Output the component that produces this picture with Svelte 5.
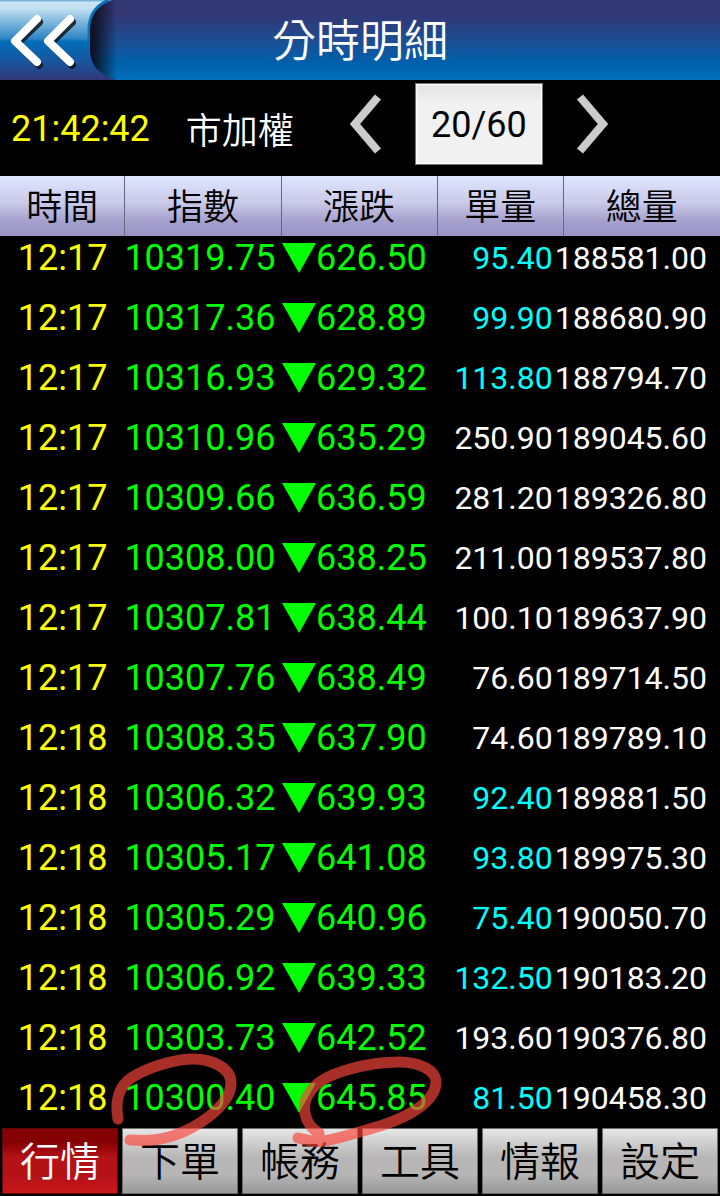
<script lang="ts">
    type Tick = {
        time: string
        price: string
        diff: string
        volume: string
        total: string
        small?: boolean
    }

    const columns = ['時間', '指數', '漲跌', '單量', '總量']

    // small: 單量以青色顯示
    const ticks: Tick[] = [
        { time: '12:17', price: '10319.75', diff: '626.50', volume: '95.40', total: '188581.00', small: true },
        { time: '12:17', price: '10317.36', diff: '628.89', volume: '99.90', total: '188680.90', small: true },
        { time: '12:17', price: '10316.93', diff: '629.32', volume: '113.80', total: '188794.70', small: true },
        { time: '12:17', price: '10310.96', diff: '635.29', volume: '250.90', total: '189045.60' },
        { time: '12:17', price: '10309.66', diff: '636.59', volume: '281.20', total: '189326.80' },
        { time: '12:17', price: '10308.00', diff: '638.25', volume: '211.00', total: '189537.80' },
        { time: '12:17', price: '10307.81', diff: '638.44', volume: '100.10', total: '189637.90' },
        { time: '12:17', price: '10307.76', diff: '638.49', volume: '76.60', total: '189714.50' },
        { time: '12:18', price: '10308.35', diff: '637.90', volume: '74.60', total: '189789.10' },
        { time: '12:18', price: '10306.32', diff: '639.93', volume: '92.40', total: '189881.50', small: true },
        { time: '12:18', price: '10305.17', diff: '641.08', volume: '93.80', total: '189975.30', small: true },
        { time: '12:18', price: '10305.29', diff: '640.96', volume: '75.40', total: '190050.70', small: true },
        { time: '12:18', price: '10306.92', diff: '639.33', volume: '132.50', total: '190183.20', small: true },
        { time: '12:18', price: '10303.73', diff: '642.52', volume: '193.60', total: '190376.80' },
        { time: '12:18', price: '10300.40', diff: '645.85', volume: '81.50', total: '190458.30', small: true },
    ]

    const tabs = ['行情', '下單', '帳務', '工具', '情報', '設定']

    let active = $state('行情')
</script>

<div class="app">
    <header>
        <button class="back" aria-label="返回">
            <svg viewBox="0 0 120 80" width="120" height="80">
                <defs>
                    <linearGradient id="gloss" x1="0" y1="0" x2="0" y2="1">
                        <stop offset="0" stop-color="#5fa9d6" />
                        <stop offset="0.03" stop-color="#cbe5f3" />
                        <stop offset="0.1" stop-color="#c3e1f1" />
                        <stop offset="0.48" stop-color="#2f86c5" />
                        <stop offset="0.52" stop-color="#006db8" />
                        <stop offset="0.75" stop-color="#1658a1" />
                        <stop offset="1" stop-color="#323676" />
                    </linearGradient>
                    <linearGradient id="shade" x1="0" y1="0" x2="1" y2="0">
                        <stop offset="0" stop-color="#0b0b18" stop-opacity="0.95" />
                        <stop offset="0.25" stop-color="#0b0b18" stop-opacity="0.75" />
                        <stop offset="0.9" stop-color="#0b0b18" stop-opacity="0" />
                    </linearGradient>
                    <clipPath id="edge">
                        <path d="M120 0H112Q90 8 90 30V50Q90 72 116 80H120Z" />
                    </clipPath>
                </defs>
                <path d="M0 0H112Q90 8 90 30V50Q90 72 116 80H0Z" fill="url(#gloss)" />
                <path d="M109 0Q89 8 89 30V40" fill="none" stroke="#0872bb" stroke-width="3" />
                <rect x="90" width="30" height="80" fill="url(#shade)" clip-path="url(#edge)" />
                <g fill="none" stroke-width="8" stroke-linecap="round" stroke-linejoin="round">
                    <path d="M39 22L17 43L39 65M72 22L50 43L72 65" stroke="#10151d" stroke-opacity="0.85" />
                    <path d="M37 19L15 41L37 62M70 19L48 41L70 62" stroke="#fff" />
                </g>
            </svg>
        </button>
        <h1>分時明細</h1>
    </header>

    <section class="info">
        <time>21:42:42</time>
        <span class="name">市加權</span>
        <div class="pager">
            <button class="arrow" aria-label="上一頁">
                <svg viewBox="0 0 32 60" width="32" height="60"><path d="M28 3L5 30L28 57" /></svg>
            </button>
            <button class="page">20/60</button>
            <button class="arrow" aria-label="下一頁">
                <svg viewBox="0 0 32 60" width="32" height="60"><path d="M4 3L27 30L4 57" /></svg>
            </button>
        </div>
    </section>

    <main>
        <table>
            <thead>
                <tr>
                    {#each columns as column}
                        <th scope="col">{column}</th>
                    {/each}
                </tr>
            </thead>
            <tbody>
                {#each ticks as tick}
                    <tr>
                        <td class="time">{tick.time}</td>
                        <td class="price"><span>{tick.price}</span></td>
                        <td class="diff">
                            <span>
                                <svg viewBox="0 0 34 30" width="34" height="30"><path d="M0 0H34L17 30Z" /></svg>
                                {tick.diff}
                            </span>
                        </td>
                        <td class="volume" class:small={tick.small}><span>{tick.volume}</span></td>
                        <td class="total"><span>{tick.total}</span></td>
                    </tr>
                {/each}
            </tbody>
        </table>
    </main>

    <nav>
        {#each tabs as tab}
            <button class:active={active === tab} onclick={() => (active = tab)}>{tab}</button>
        {/each}
    </nav>

    <!-- 手繪圈註 -->
    <svg class="marks" viewBox="0 0 720 156" aria-hidden="true">
        <path d="M118 79C114 56 121 42 138 34C155 25 178 19 193 19C212 19 231 28 231 43C231 63 205 82 183 92C162 101 148 101 130 100" />
        <path d="M319 93C303 84 302 65 308 55C315 42 329 35 350 29C368 24 386 22 399 22C421 22 436 31 436 42C436 61 410 76 383 85C360 92 340 98 324 101C313 103 307 100 298 98" />
    </svg>
</div>

<style>
    :global(body) {
        margin: 0;
        background: #000;
    }

    .app {
        position: relative;
        display: flex;
        flex-direction: column;
        height: 100vh;
        overflow: hidden;
        background: #000;
        color: #fff;
        font-family: Roboto, "Noto Sans CJK TC", sans-serif;
        font-size: 36px;
    }

    button {
        margin: 0;
        padding: 0;
        border: none;
        background: none;
        color: inherit;
        font: inherit;
        cursor: pointer;
    }

    svg {
        display: block;
    }

    header {
        display: grid;
        grid-template-columns: 1fr auto 1fr;
        align-items: center;
        flex: none;
        height: 80px;
        background: linear-gradient(#333775 18%, #1c4e94 52%, #0060ab 78%, #006fba);
    }

    .back {
        justify-self: start;
    }

    h1 {
        margin: 0;
        padding-top: 4px;
        font-size: 44px;
        font-weight: 350;
        line-height: 76px;
    }

    .info {
        display: flex;
        align-items: center;
        flex: none;
        height: 96px;
        padding-left: 11px;
    }

    time {
        padding-top: 2px;
        color: #ff0;
    }

    .name {
        margin-left: 36px;
        font-weight: 350;
    }

    .pager {
        display: flex;
        align-items: center;
        align-self: flex-start;
        margin: 2px 0 0 56px;
    }

    .arrow {
        padding: 12px 0;
    }

    .arrow path {
        fill: none;
        stroke: #ccc;
        stroke-width: 8;
    }

    .page {
        box-sizing: border-box;
        width: 128px;
        height: 82px;
        margin: 0 33px;
        padding-top: 2px;
        border: 1px solid #777;
        background: linear-gradient(#e2e2e2, #f1f1f1 24%, #f1f1f1);
        box-shadow: inset 0 0 2px 1px #fff;
        color: #000;
    }

    main {
        flex: 1;
        min-height: 0;
        overflow: auto;
        scrollbar-width: none;
    }

    table {
        width: 100%;
        table-layout: fixed;
        border-collapse: separate;
        border-spacing: 0;
    }

    th {
        position: sticky;
        top: 0;
        box-sizing: border-box;
        height: 60px;
        padding: 4px 0 0;
        border-right: 1px solid #66667c;
        background: linear-gradient(#dfe6ff, #c9c9e8 45%, #a5a0cc 75%, #9a93c5);
        color: #000;
        font-weight: 350;
        line-height: 56px;
    }

    th:last-child {
        border-right: none;
    }

    th:nth-child(1) {
        width: 17.4%;
    }

    th:nth-child(2),
    th:nth-child(3) {
        width: 21.7%;
    }

    th:nth-child(4) {
        width: 17.5%;
    }

    td {
        padding: 0 0 16px;
        line-height: 44px;
        vertical-align: top;
        white-space: nowrap;
    }

    /* 數字靠右, 欄寬不足時向左溢出 */
    td span {
        display: flex;
        align-items: center;
        justify-content: flex-end;
    }

    .time {
        color: #ff0;
        text-align: center;
    }

    .price,
    .diff {
        color: #0f0;
    }

    .price {
        padding-right: 6px;
    }

    .diff {
        padding-right: 11px;
    }

    .diff path {
        fill: #0f0;
    }

    .volume,
    .total {
        font-size: 32px;
    }

    .volume {
        padding-right: 11px;
    }

    .small {
        color: #0ff;
    }

    .total {
        padding-right: 13px;
    }

    nav {
        display: flex;
        gap: 4px;
        flex: none;
        padding: 0 2px 2px;
        background: #000;
    }

    nav button {
        box-sizing: border-box;
        flex: 1;
        height: 66px;
        padding-top: 4px;
        border: 1px solid #6d6d6d;
        background: linear-gradient(#e6e6e6, #b7b5b6 45%, #b7b5b6 70%, #999);
        color: #000;
        font-size: 40px;
        font-weight: 350;
        line-height: 60px;
    }

    nav .active {
        border-color: #5d0a0c;
        background: linear-gradient(#850003 20%, #b51217 45%, #b51217 75%, #cb171c);
        color: #fff;
    }

    .marks {
        position: absolute;
        bottom: 0;
        left: 0;
        width: 100%;
        pointer-events: none;
    }

    .marks path {
        fill: none;
        stroke: #fb463a;
        stroke-opacity: 0.67;
        stroke-width: 11;
        stroke-linecap: round;
        stroke-linejoin: round;
    }
</style>
